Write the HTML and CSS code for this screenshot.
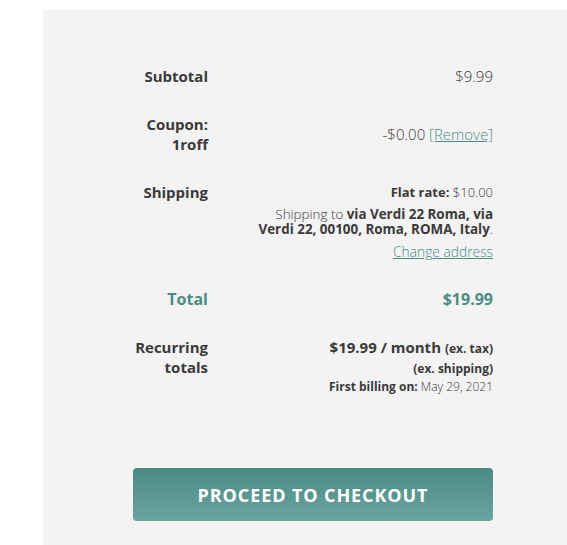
FILE: index.html
```html
<!DOCTYPE html>
<html>
<head>
<meta charset="utf-8">
<link rel="stylesheet" href="styles.css">
</head>
<body>
<div class="panel">
  <div class="totals">
    <div class="row">
      <div class="label">Subtotal</div>
      <div class="value light">$9.99</div>
    </div>
    <div class="row">
      <div class="label">Coupon:<br>1roff</div>
      <div class="value light mid">-$0.00 <a class="link" href="#">[Remove]</a></div>
    </div>
    <div class="row">
      <div class="label">Shipping</div>
      <div class="value">
        <div class="rate"><b>Flat rate:</b> <span class="light">$10.00</span></div>
        <p class="dest"><span class="light">Shipping to</span> <b>via Verdi 22 Roma, via Verdi 22, 00100, Roma, ROMA, Italy</b><span class="light">.</span></p>
        <a class="link change" href="#">Change address</a>
      </div>
    </div>
    <div class="row total">
      <div class="label">Total</div>
      <div class="value"><b>$19.99</b></div>
    </div>
    <div class="row">
      <div class="label">Recurring<br>totals</div>
      <div class="value">
        <div class="recur"><b>$19.99 / month</b> <small>(ex. tax)</small></div>
        <div class="small">(ex. shipping)</div>
        <div class="billing"><b>First billing on:</b> <span class="light">May 29, 2021</span></div>
      </div>
    </div>
  </div>
  <a class="checkout" href="#">PROCEED TO CHECKOUT</a>
</div>
</body>
</html>
```
FILE: styles.css
```css
html, body {
  margin: 0;
  padding: 0;
  background: #ffffff;
}
body {
  font-family: "Open Sans", "DejaVu Sans", sans-serif;
  color: #3a3a3a;
}
.panel {
  margin: 10px 0 0 43px;
  background: #f3f3f3;
  padding: 42px 74px 24px 90px;
  height: 535px;
  box-sizing: border-box;
}
.totals {
  display: flex;
  flex-direction: column;
}
.row {
  display: grid;
  grid-template-columns: 75px 1fr;
  padding: 14px 0;
}
.label {
  font-weight: 700;
  font-size: 15px;
  line-height: 20px;
  text-align: right;
  align-self: start;
}
.value {
  text-align: right;
  font-size: 15px;
  line-height: 20px;
}
.value b { font-weight: 700; }
.light { font-weight: 300; }
.mid { align-self: center; }
.link {
  color: #4b8c85;
  text-decoration: underline;
  font-weight: 300;
}
.rate {
  font-size: 13px;
  line-height: 20px;
}
.dest {
  margin: 5px 0 0;
  font-size: 13.4px;
  line-height: 15px;
  padding-left: 48px;
}
.change {
  display: block;
  margin: 7px 0 2px;
  font-size: 13.8px;
  line-height: 15px;
}
.total .label, .total .value {
  color: #4b8c85;
  font-size: 16px;
}
.recur {
  font-size: 15px;
  line-height: 20px;
}
.recur small {
  font-size: 12px;
  font-weight: 700;
}
.small {
  font-size: 12px;
  font-weight: 700;
  line-height: 20px;
}
.billing {
  font-size: 12px;
  line-height: 16px;
}
.checkout {
  display: flex;
  align-items: center;
  justify-content: center;
  margin-top: 59px;
  height: 53px;
  border-radius: 4px;
  background: linear-gradient(#4a8a83, #6ba49e);
  color: #ffffff;
  font-weight: 700;
  font-size: 18px;
  text-decoration: none;
  letter-spacing: 0.9px;
}
```
